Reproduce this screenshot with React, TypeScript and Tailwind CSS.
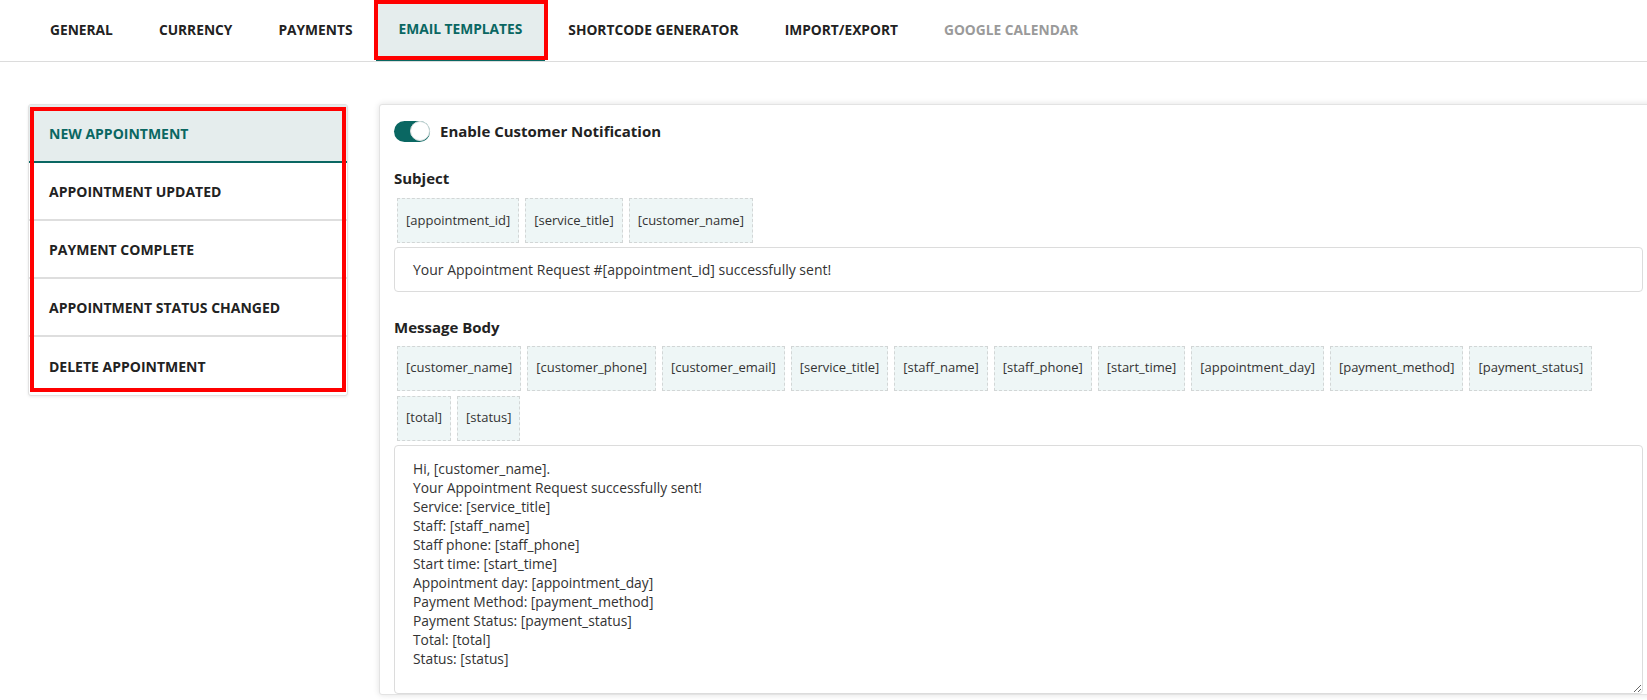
import React from "react";

const TABS = [
  { label: "GENERAL" },
  { label: "CURRENCY" },
  { label: "PAYMENTS" },
  { label: "EMAIL TEMPLATES", active: true },
  { label: "SHORTCODE GENERATOR" },
  { label: "IMPORT/EXPORT" },
  { label: "GOOGLE CALENDAR", disabled: true },
];

const TEMPLATES = [
  "NEW APPOINTMENT",
  "APPOINTMENT UPDATED",
  "PAYMENT COMPLETE",
  "APPOINTMENT STATUS CHANGED",
  "DELETE APPOINTMENT",
];

const SUBJECT_TAGS = ["[appointment_id]", "[service_title]", "[customer_name]"];

const BODY_TAGS = [
  "[customer_name]",
  "[customer_phone]",
  "[customer_email]",
  "[service_title]",
  "[staff_name]",
  "[staff_phone]",
  "[start_time]",
  "[appointment_day]",
  "[payment_method]",
  "[payment_status]",
];

const BODY_TEXT = `Hi, [customer_name].
Your Appointment Request successfully sent!
Service: [service_title]
Staff: [staff_name]
Staff phone: [staff_phone]
Start time: [start_time]
Appointment day: [appointment_day]
Payment Method: [payment_method]
Payment Status: [payment_status]
Total: [total]
Status: [status]`;

function Tag({ text }: { text: string }) {
  return (
    <span className="h-[45px] flex items-center px-[8px] bg-[#eef6f6] border border-dashed border-[#d2d6d6] text-[13px] text-[#333]">
      {text}
    </span>
  );
}

export default function App() {
  return (
    <div className="min-h-[700px] bg-white overflow-hidden font-['Open_Sans',sans-serif] text-[#222]">
      {/* Tabs */}
      <div className="flex h-[62px] border-b border-[#dcdcdc] pl-[27px]">
        {TABS.map((tab) => (
          <div
            key={tab.label}
            className={`relative flex items-center px-[23px] text-[13.75px] font-bold ${
              tab.active
                ? "bg-[#e5eded] text-[#0a6762] border-b-[3px] border-[#0a6762]"
                : tab.disabled
                ? "text-[#9a9a9a]"
                : "text-[#222]"
            }`}
          >
            {tab.label}
            {tab.active && (
              <div className="absolute -left-[2px] -right-[3px] top-0 -bottom-[2px] border-4 border-[#ff0000]" />
            )}
          </div>
        ))}
      </div>

      <div className="flex items-start gap-[31px] pl-[28px] pt-[42px]">
        {/* Sidebar */}
        <div className="relative w-[320px] shrink-0 border border-[#e2e2e2] rounded-[3px] shadow-[0_1px_3px_rgba(0,0,0,0.08)] bg-white">
          {TEMPLATES.map((t, i) => (
            <div
              key={t}
              className={`h-[58px] flex items-center pl-[20px] text-[14px] font-bold ${
                i === 0
                  ? "bg-[#e5eded] text-[#0a6762] border-b-2 border-[#0a6762]"
                  : i < TEMPLATES.length - 1
                  ? "border-b-2 border-[#dedede]"
                  : ""
              }`}
            >
              {t}
            </div>
          ))}
          <div className="absolute left-[1px] right-[1px] top-[2px] bottom-[3px] border-4 border-[#ff0000]" />
        </div>

        {/* Editor card */}
        <div className="w-[1290px] shrink-0 border border-[#e3e3e3] rounded-[3px] shadow-[0_0_6px_rgba(0,0,0,0.12)] bg-white px-[14px] pt-[15px]">
          <div className="flex items-center gap-[10px]">
            <div className="relative w-[36px] h-[21px] rounded-full bg-[#0a6762]">
              <div className="absolute right-0 top-[0.5px] w-[20px] h-[20px] rounded-full bg-white border border-[#d6dede]" />
            </div>
            <span className="text-[15px] font-bold text-[#222]">Enable Customer Notification</span>
          </div>

          <div className="mt-[24px] text-[15px] font-bold text-[#222]">Subject</div>
          <div className="mt-[9px] flex gap-[6px] pl-[3px]">
            {SUBJECT_TAGS.map((t) => (
              <Tag key={t} text={t} />
            ))}
          </div>
          <div className="mt-[4px] w-[1249px] h-[45px] flex items-center pl-[18px] border border-[#dcdcdc] rounded-[4px] text-[14px] text-[#333]">
            Your Appointment Request #[appointment_id] successfully sent!
          </div>

          <div className="mt-[24px] text-[15px] font-bold text-[#222]">Message Body</div>
          <div className="mt-[7px] flex flex-col gap-[5px] pl-[3px]">
            <div className="flex gap-[6px]">
              {BODY_TAGS.map((t) => (
                <Tag key={t} text={t} />
              ))}
            </div>
            <div className="flex gap-[6px]">
              <Tag text="[total]" />
              <Tag text="[status]" />
            </div>
          </div>
          <textarea
            defaultValue={BODY_TEXT}
            className="mt-[4px] block w-[1249px] h-[249px] border border-[#dcdcdc] rounded-[4px] pl-[18px] pt-[13px] text-[13.8px] leading-[19px] text-[#333] outline-none font-['Open_Sans',sans-serif]"
          />
        </div>
      </div>
    </div>
  );
}
